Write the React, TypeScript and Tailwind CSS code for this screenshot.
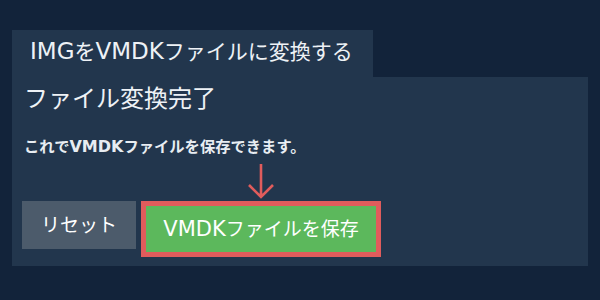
import React from "react";

const font = { fontFamily: '"DejaVu Sans", "Noto Sans CJK JP", sans-serif' };

function L({ children, size }: { children: React.ReactNode; size: string }) {
  return (
    <span className={size} style={{ lineHeight: 1 }}>
      {children}
    </span>
  );
}

export default function App() {
  return (
    <div className="w-[600px] h-[300px] bg-[#12233a] pt-[30px] pl-[12px]" style={font}>
      <div className="flex flex-col w-[576px]">
        <div className="w-[361px] h-[47px] bg-[#22364d] flex items-center pl-[18px] text-[21px] text-[#eef2f6] leading-none pb-[4px]">
          <span>
            <L size="text-[23px]">IMG</L>を<L size="text-[23px]">VMDK</L>ファイルに変換する
          </span>
        </div>
        <div className="h-[189px] bg-[#22364d] flex flex-col px-[12px]">
          <div className="mt-[10px] text-[24px] leading-none text-[#eef2f6]">ファイル変換完了</div>
          <div className="mt-[28px] text-[15.3px] leading-none font-bold text-[#e8edf2]">
            これで<L size="text-[16px] font-bold">VMDK</L>ファイルを保存できます。
          </div>
          <div className="flex items-start gap-[5px] mt-[7px] ml-[-2px]">
            <div className="flex flex-col">
              <div className="h-[39px]" />
              <div className="w-[114px] h-[48px] bg-[#4c5b6b] flex items-center justify-center text-[19px] text-white">
                リセット
              </div>
            </div>
            <div className="flex flex-col items-center">
              <svg width="30" height="39" viewBox="0 0 30 39">
                <path d="M15 2 V35 M3 23 L15 35 L27 23" stroke="#e05c5c" strokeWidth="2.6" fill="none" />
              </svg>
              <div className="w-[240px] h-[56px] border-[5px] border-[#e05c5c] bg-[#5cb85c] flex items-center justify-center text-[19px] text-white">
                <span>
                  <L size="text-[21px]">VMDK</L>ファイルを保存
                </span>
              </div>
            </div>
          </div>
        </div>
      </div>
    </div>
  );
}
